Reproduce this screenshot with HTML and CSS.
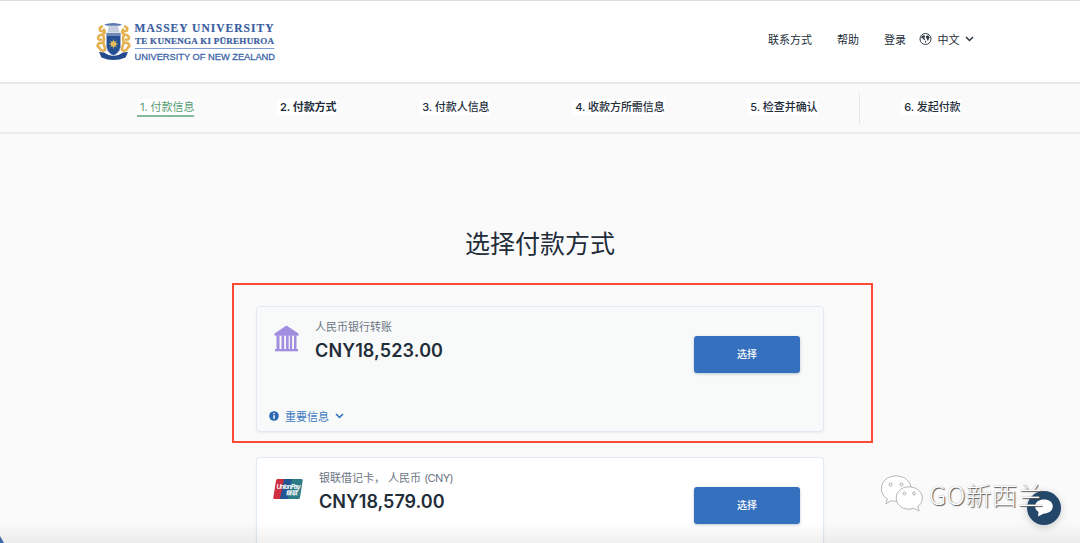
FILE: index.html
```html
<!DOCTYPE html>
<html lang="zh-CN">
<head>
    <meta charset="UTF-8">
    <meta name="viewport" content="width=device-width, initial-scale=1.0">
    <title>选择付款方式</title>
    <link rel="stylesheet" href="styles.css">
</head>
<body>

    <header class="site-header">
        <svg class="logo" width="186" height="48" viewBox="0 0 186 48">
            <!-- Crest -->
            <g fill="none" stroke="#e5b253" stroke-width="2.600" stroke-linecap="round" stroke-linejoin="round">
                <path d="M7 4.500q-3 1-2 4l3 1M9 7.500q2 3-1 5-4 0-5 3 0 3 3 2M8 13q2 4 0 8-5-1-5.500 3l2 2M8 20q2 5 2 8-3 2-5-1"/>
                <path d="M30 4.500q3 1 2 4l-3 1M28 7.500q-2 3 1 5 4 0 5 3 0 3-3 2M29 13q-2 4 0 8 5-1 5.500 3l-2 2M29 20q-2 5-2 8 3 2 5-1"/>
            </g>
            <path d="M9 2.500q9-3 18 0l-2 1.200H12z" fill="#5878ae"/>
            <path d="M14 4h9l1.500 6h-12z" fill="#c3cddd"/>
            <path d="M11.500 11h14v14q-1 6-7 8.500-6-2.500-7-8.500z" fill="#234f94" stroke="#9fb0cf" stroke-width=".8"/>
            <path d="M12 11h13v3H12z" fill="#6f88b4"/>
            <circle cx="18.500" cy="22" r="2.700" fill="#efcd69"/>
            <path d="M18.500 17.500v9M14 22h9M15.300 18.800l6.400 6.400M21.700 18.800l-6.400 6.400" stroke="#dfb64f" stroke-width=".9"/>
            <path d="M4 30l5 .5q9.500 7 19 0l5-.5-2.500 5.500q-12 5-24 0z" fill="#24498c"/>
            <!-- Name -->
            <text class="logo-serif" x="39.500" y="9.800" font-size="11.500" textLength="139">MASSEY UNIVERSITY</text>
            <text class="logo-serif" x="40" y="22" font-size="9" textLength="139">TE KUNENGA KI PŪREHUROA</text>
            <path d="M40 26.500h139.500" stroke="#7f9dce"/>
            <text class="logo-sans" x="39.500" y="38" font-size="9.800" textLength="140.500" lengthAdjust="spacingAndGlyphs">UNIVERSITY OF NEW ZEALAND</text>
        </svg>
        <nav class="top-nav">
            <a class="nav-link">联系方式</a>
            <a class="nav-link">帮助</a>
            <a class="nav-link">登录</a>
            <a class="language">
                <svg width="13" height="14" viewBox="0 0 13 14">
                    <circle cx="6.500" cy="7" r="5.500" fill="none" stroke="#343d48" stroke-width="1"/>
                    <path d="M2.200 4.800l2-1.600 2 .6-.3 1.500-1.200.8 1.400.7-.2 1.400-1.200-.4-.7-1.400-1.500-.4zM7 4l2-.7 1.700 2-.7 1.300-.8 2-1-.2-.2-1.600-1-.8zM6 8.500l1 .5.2 1.500-.8.8z" fill="#343d48"/>
                </svg>
                <span>中文</span>
                <svg width="9" height="6" viewBox="0 0 9 6"><path d="M1 1l3.500 3.500L8 1" fill="none" stroke="#2a3340" stroke-width="1.500"/></svg>
            </a>
        </nav>
    </header>

    <div class="steps">
        <span class="step active">1. 付款信息</span>
        <span class="step strong">2. 付款方式</span>
        <span class="step">3. 付款人信息</span>
        <span class="step">4. 收款方所需信息</span>
        <span class="step">5. 检查并确认</span>
        <div class="last-step"><span class="step">6. 发起付款</span></div>
    </div>

    <main>
        <h1>选择付款方式</h1>

        <section class="option selected">
            <div class="option-main">
                <svg class="bank-icon" width="26" height="27" viewBox="0 0 26 27" fill="#a18ee0">
                    <path d="M12.500 0.500L24.500 8.500v2.300H.5V8.500z"/>
                    <path d="M2.500 10.500h3v13.500h-3zM7.500 10.500h2.700v13.500H7.500zM12 10.500h2.700v13.500H12zM15.900 10.500h2.200v13.500h-2.200zM20 10.500h2.500v13.500H20z"/>
                    <path d="M1 24h23v2.300H1z"/>
                </svg>
                <div class="details">
                    <div class="method">人民币银行转账</div>
                    <div class="amount wide">CNY18,523.00</div>
                </div>
                <button class="select-button">选择</button>
            </div>
            <a class="more-info">
                <svg width="10" height="10" viewBox="0 0 10 10"><circle cx="5" cy="5" r="4.800" fill="#2d68b3"/><path d="M5 4.200v3.600M5 2v1.300" fill="none" stroke="#fff" stroke-width="1.500"/></svg>
                <span>重要信息</span>
                <svg width="9" height="6" viewBox="0 0 9 6"><path d="M1 1l3.500 3.300L8 1" fill="none" stroke="#3572bd" stroke-width="1.600"/></svg>
            </a>
        </section>

        <section class="option">
            <div class="option-main">
                <svg class="unionpay" width="30" height="20" viewBox="0 0 30 20">
                    <path d="M4.500 0H13L9 20H1.500Q0 20 .3 18.500L3 1.500Q3.300 0 4.500 0z" fill="#cf2f40"/>
                    <path d="M11 0h9l-4 20H7z" fill="#235493"/>
                    <path d="M19 0h9.500Q30 0 29.700 1.500L27 18.500Q26.700 20 25.500 20H15z" fill="#2c7c87"/>
                    <text class="card-name" x="3.500" y="10" font-size="6.500" textLength="24">UnionPay</text>
                    <text class="card-name" x="12.500" y="15.700" font-size="6" textLength="12">银联</text>
                </svg>
                <div class="details">
                    <div class="method">银联借记卡， 人民币 <span class="currency">(CNY)</span></div>
                    <div class="amount">CNY18,579.00</div>
                </div>
                <button class="select-button">选择</button>
            </div>
        </section>
    </main>

    <div class="highlight"></div>
    <div class="bottom-shade"></div>
    <div class="corner"></div>

    <button class="chat-button">
        <svg width="20" height="20" viewBox="0 0 20 20"><path d="M10 1.500c5 0 8.800 2.700 8.800 6.800S15 15.500 10 15.500L4 18.500 4.500 14Q1 12 1.200 8.300C1.300 4.200 5 1.500 10 1.500z" fill="#fff"/></svg>
    </button>

    <div class="watermark">
        <svg class="bubbles" width="44" height="38" viewBox="0 0 44 38">
            <g fill="#fff">
                <path d="M16 1C7.500 1 1.500 6.500 1.500 13.500c0 4.500 2.200 8 6 10.500l-1.500 4.500 5.500-3q5 1.300 9.500 0C27 24 31 19 31 13.500 31 6.500 24.500 1 16 1z"/>
                <path d="M29 12c-7.500 0-12.700 4.800-12.700 11S21.500 34 29 34q2.500 0 5-.8l5 2.800-1.300-4.500c3-2.200 4.500-5 4.500-8.500 0-6.200-5.700-11-13.200-11z"/>
            </g>
            <g fill="#fff" stroke="#999" stroke-width=".8"><circle cx="10.500" cy="9.500" r="1.500"/><circle cx="21.500" cy="9.500" r="1.500"/><circle cx="24.500" cy="18.500" r="1.400"/><circle cx="34" cy="18.500" r="1.400"/></g>
        </svg>
        <span>GO新西兰</span>
    </div>

</body>
</html>
```
FILE: styles.css
```css
* {
    box-sizing: border-box;
}

body {
    font-family: Inter, "Noto Sans CJK SC", sans-serif;
    margin: 0;
    height: 543px;
    overflow: hidden;
    position: relative;
    background-color: #fafafa;
    color: #232d3a;
    font-size: 11px;
}

.site-header {
    height: 84px;
    padding: 21px 106px 0 95px;
    display: flex;
    justify-content: space-between;
    align-items: flex-start;
    background: #fff;
    border-top: 1px solid #ddd;
    border-bottom: 2px solid #e6e9eb;
}

.logo-serif {
    font-family: "Liberation Serif", serif;
    font-weight: bold;
    fill: #3b5e9f;
    stroke: #3b5e9f;
    stroke-width: .2px;
}

.logo-sans {
    font-family: "Liberation Sans", sans-serif;
    fill: #3d66ac;
    stroke: #3d66ac;
    stroke-width: .3px;
}

.top-nav {
    display: flex;
    align-items: center;
    height: 20px;
    margin-top: 7px;
    gap: 25px;
}

.language {
    display: flex;
    align-items: center;
    gap: 5.5px;
    margin-left: -12px;
}

.steps {
    height: 50px;
    padding-left: 137px;
    display: flex;
    align-items: center;
    gap: 82.7px;
    border-bottom: 2px solid #ececec;
    font-weight: 500;
    white-space: nowrap;
}

.step {
    padding: 0 0 0 3px;
    height: 18px;
    line-height: 16px;
    background: #fff;
    background-clip: padding-box;
    border-bottom: 2px solid transparent;
    font-size: 11px;
    letter-spacing: -.06px;
}

.step.active {
    color: #579b73;
    border-color: #86b99b;
    font-weight: 400;
}

.step.strong {
    font-weight: 600;
}

.last-step {
    height: 31px;
    margin-left: -41px;
    padding-left: 41px;
    display: flex;
    align-items: center;
    border-left: 1px solid #e5e5e5;
}

main {
    width: 568px;
    height: 409px;
    margin: 0 auto;
    padding-top: 91px;
}

h1 {
    margin: 0 0 43px;
    font-size: 25px;
    font-weight: 400;
    line-height: 38px;
    text-align: center;
}

.option {
    height: 126px;
    margin-bottom: 25px;
    padding: 11px 23px 0 17px;
    border: 1px solid #e1e9f2;
    border-radius: 4px;
    background: #fff;
    box-shadow: 0 1px 2px rgba(60, 100, 150, .1);
}

/* The second card is cut off by the bottom of the window */
.option:last-child {
    height: 86px;
    margin-bottom: 0;
    border-bottom: 0;
    border-radius: 4px 4px 0 0;
}

.option.selected {
    background: #f8faf9;
}

.option-main {
    display: flex;
    height: 74px;
    align-items: flex-start;
}

.bank-icon {
    margin: 7px 15px 0 0;
}

.unionpay {
    margin: 10px 16px 0 -1px;
}

.card-name {
    font-family: "Liberation Sans", "Noto Sans CJK SC", sans-serif;
    font-weight: bold;
    font-style: italic;
    fill: #fff;
}

.method {
    height: 17px;
    line-height: 18px;
    color: #6c7584;
}

.currency {
    letter-spacing: -.6px;
}

.amount {
    margin-top: 3px;
    font-size: 18px;
    font-weight: 600;
    line-height: 25px;
}

.amount.wide {
    letter-spacing: .12px;
}

.select-button {
    width: 106px;
    height: 37px;
    margin: 18px 0 0 auto;
    padding-bottom: 3px;
    border: 0;
    border-radius: 3px;
    background: #3470bd;
    color: #fff;
    font-family: inherit;
    font-size: 10px;
    font-weight: 500;
    box-shadow: 0 1px 3px rgba(30, 70, 120, .3);
}

.more-info {
    display: flex;
    align-items: center;
    gap: 6px;
    height: 24px;
    margin: 12px 0 0 -5px;
    color: #3d78c0;
}

.highlight {
    position: absolute;
    left: 232px;
    top: 283px;
    width: 641px;
    height: 160px;
    border: 2px solid #fb4b33;
}

.bottom-shade {
    position: absolute;
    left: 0;
    right: 0;
    bottom: 0;
    height: 20px;
    background: linear-gradient(transparent, rgba(0, 0, 0, .06));
}

.corner {
    position: absolute;
    left: 0;
    bottom: 0;
    width: 4px;
    height: 7px;
    background: #3f6ba8;
    clip-path: polygon(0 0, 100% 100%, 0 100%);
}

.chat-button {
    position: absolute;
    left: 1027px;
    top: 491px;
    width: 34px;
    height: 34px;
    padding: 0;
    display: flex;
    align-items: center;
    justify-content: center;
    border: 0;
    border-radius: 50%;
    background: #23466b;
    box-shadow: 0 2px 9px rgba(0, 0, 0, .2);
}

.watermark {
    position: absolute;
    left: 880px;
    top: 475px;
    display: flex;
    gap: 5px;
    color: #fff;
    font-family: "Noto Sans CJK SC", sans-serif;
    font-size: 25.5px;
    font-weight: 300;
    line-height: 38px;
    white-space: nowrap;
    letter-spacing: .5px;
    text-shadow: 1px 1px 1px #555, 0 0 1px #aaa;
}

.bubbles path {
    stroke: #bbb;
    stroke-width: .6px;
    filter: drop-shadow(.7px .8px .4px #777);
}
```
